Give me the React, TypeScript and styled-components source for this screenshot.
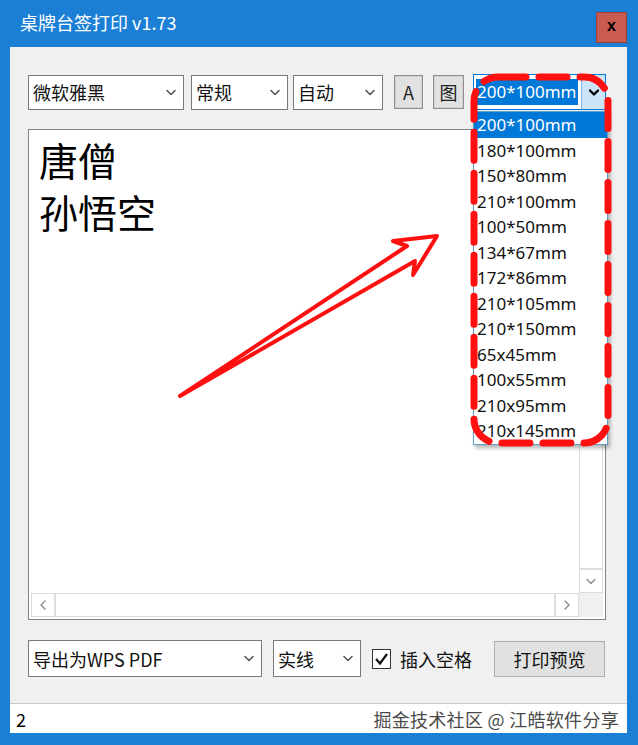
import React from "react";
import styled, { createGlobalStyle } from "styled-components";

const BLUE = "#1b7fd6";
const CJK = `"Noto Sans CJK SC", "Noto Sans", sans-serif`;
const UI = `"Noto Sans", "Noto Sans CJK SC", sans-serif`;

const GlobalStyle = createGlobalStyle`
  html, body { margin: 0; padding: 0; background: ${BLUE}; }
  body { font-family: ${CJK}; }
`;

const Window = styled.div`
  position: relative;
  width: 638px;
  height: 745px;
  background: ${BLUE};
  display: flex;
  flex-direction: column;
  overflow: hidden;
`;

const TitleBar = styled.div`
  height: 47px;
  flex: none;
  display: flex;
  justify-content: space-between;
  align-items: flex-start;
  padding: 0 11px 0 20px;
`;

const Title = styled.div`
  margin-top: 9px;
  color: #fff;
  font-size: 18px;
  line-height: 26px;
  font-family: ${CJK};
`;

const CloseButton = styled.div`
  margin-top: 12px;
  width: 31px;
  height: 31px;
  box-sizing: border-box;
  background: #c95b50;
  border: 1px solid #9b4038;
  display: flex;
  align-items: center;
  justify-content: center;
  font: bold 16px "Liberation Sans", sans-serif;
  color: #000;
  padding-bottom: 3px;
`;

const Client = styled.div`
  flex: 1;
  margin: 0 11px 12px 10px;
  background: #f0f0f0;
  display: flex;
  flex-direction: column;
`;

const Body = styled.div`
  padding: 27px 21px 0 18px;
  display: flex;
  flex-direction: column;
`;

const Toolbar = styled.div`
  display: flex;
  align-items: center;
  height: 36px;
`;

const SelectBox = styled.div<{ $w: number; $ml?: number; $h?: number }>`
  width: ${(p) => p.$w}px;
  height: ${(p) => p.$h ?? 35}px;
  margin-left: ${(p) => p.$ml ?? 0}px;
  flex: none;
  box-sizing: border-box;
  border: 1px solid #7a7a7a;
  background: #fff;
  display: flex;
  align-items: center;
  justify-content: space-between;
  padding: 0 7px 0 4px;
  font-size: 18px;
  color: #111;
  white-space: nowrap;
`;

const ToolButton = styled.div<{ $w: number; $ml: number }>`
  width: ${(p) => p.$w}px;
  height: 34px;
  margin-left: ${(p) => p.$ml}px;
  flex: none;
  box-sizing: border-box;
  background: #e1e1e1;
  border: 1px solid #8f8f8f;
  box-shadow: inset 0 0 0 1px #d0d0d0;
  display: flex;
  align-items: center;
  justify-content: center;
  font-size: 18px;
  color: #222;
`;

const Combo = styled.div`
  position: relative;
  width: 133px;
  height: 36px;
  margin-left: 9px;
  flex: none;
  box-sizing: border-box;
  border: 1px solid #0078d7;
  background: #fff;
  display: flex;
`;

const ComboField = styled.div`
  flex: 1;
  overflow: hidden;
  display: flex;
  align-items: center;
  padding-left: 2px;
`;

const Selection = styled.span`
  background: #0078d7;
  color: #fff;
  font-family: ${UI};
  font-size: 17px;
  line-height: 26px;
  padding: 0 1px;
  white-space: nowrap;
`;

const ComboArrow = styled.div`
  width: 23px;
  flex: none;
  background: #cce4f7;
  border-left: 1px solid #7eb4ea;
  display: flex;
  align-items: center;
  justify-content: center;
`;

const DropList = styled.div`
  position: absolute;
  top: calc(100% + 2px);
  left: -1px;
  width: 135px;
  box-sizing: border-box;
  background: #fff;
  border: 1px solid #5f9ec8;
  box-shadow: 2px 3px 4px rgba(0, 0, 0, 0.3);
  z-index: 5;
`;

const DropItem = styled.div<{ $active?: boolean }>`
  height: 25.5px;
  line-height: 25.5px;
  padding-left: 3px;
  font-family: ${UI};
  font-size: 17px;
  color: ${(p) => (p.$active ? "#fff" : "#111")};
  background: ${(p) => (p.$active ? "#0078d7" : "transparent")};
  white-space: nowrap;
`;

const Editor = styled.div`
  margin-top: 19px;
  height: 491px;
  box-sizing: border-box;
  border: 1px solid #828282;
  padding: 2px;
  background: #fff;
  display: grid;
  grid-template-columns: 1fr 24px;
  grid-template-rows: 1fr 24px;
`;

const EditorText = styled.div`
  padding: 1px 8px;
  font-size: 39px;
  line-height: 52px;
  color: #000;
  font-family: ${CJK};
`;

const VScroll = styled.div`
  display: flex;
  flex-direction: column;
`;

const HScroll = styled.div`
  display: flex;
`;

const Track = styled.div`
  flex: 1;
  background: #fff;
  border: 1px solid #dcdcdc;
`;

const ScrollBtn = styled.div`
  width: 24px;
  height: 24px;
  flex: none;
  box-sizing: border-box;
  background: #fff;
  border: 1px solid #dcdcdc;
  display: flex;
  align-items: center;
  justify-content: center;
`;

const Corner = styled.div`
  background: #f0f0f0;
`;

const BottomRow = styled.div`
  margin-top: 20px;
  height: 37px;
  display: flex;
  align-items: center;
`;

const CheckBox = styled.div`
  width: 19px;
  height: 20px;
  margin-left: 11px;
  flex: none;
  box-sizing: border-box;
  border: 1px solid #333;
  background: #fff;
  display: flex;
  align-items: center;
  justify-content: center;
`;

const CheckLabel = styled.span`
  margin-left: 9px;
  font-size: 18px;
  color: #111;
`;

const PreviewButton = styled.div`
  margin-left: auto;
  margin-right: 1px;
  width: 111px;
  height: 36px;
  box-sizing: border-box;
  background: #e1e1e1;
  border: 1px solid #adadad;
  display: flex;
  align-items: center;
  justify-content: center;
  font-size: 18px;
  color: #111;
`;

const StatusBar = styled.div`
  margin-top: auto;
  height: 30px;
  box-sizing: border-box;
  background: #fff;
  border-top: 1px solid #c8c8c8;
  display: flex;
  align-items: center;
  justify-content: space-between;
  padding: 0 8px 0 6px;
  font-size: 18px;
  color: #000;
`;

const Watermark = styled.span`
  color: #4a4a4a;
  font-size: 18px;
  letter-spacing: 0.3px;
  text-shadow: 0 0 2px #fff, 0 0 2px #fff;
`;

const Overlay = styled.svg`
  position: absolute;
  left: 0;
  top: 0;
  pointer-events: none;
  z-index: 10;
`;

const Chevron = ({ color = "#555", w = 1.6, dir = "down" }: { color?: string; w?: number; dir?: "down" | "left" | "right" }) => {
  const pts = dir === "down" ? "1,1.5 5,5.5 9,1.5" : dir === "left" ? "5,1 1,5 5,9" : "1,1 5,5 1,9";
  const size = dir === "down" ? { width: 10, height: 7 } : { width: 6, height: 10 };
  return (
    <svg width={size.width} height={size.height} viewBox={`0 0 ${size.width} ${size.height}`}>
      <polyline points={pts} fill="none" stroke={color} strokeWidth={w} strokeLinecap="round" strokeLinejoin="round" />
    </svg>
  );
};

const sizes = [
  "200*100mm",
  "180*100mm",
  "150*80mm",
  "210*100mm",
  "100*50mm",
  "134*67mm",
  "172*86mm",
  "210*105mm",
  "210*150mm",
  "65x45mm",
  "100x55mm",
  "210x95mm",
  "210x145mm",
];

export default function App() {
  return (
    <Window>
      <GlobalStyle />
      <TitleBar>
        <Title>桌牌台签打印 v1.73</Title>
        <CloseButton>x</CloseButton>
      </TitleBar>
      <Client>
        <Body>
          <Toolbar>
            <SelectBox $w={156}>
              微软雅黑 <Chevron />
            </SelectBox>
            <SelectBox $w={97} $ml={7}>
              常规 <Chevron />
            </SelectBox>
            <SelectBox $w={90} $ml={5}>
              自动 <Chevron />
            </SelectBox>
            <ToolButton $w={29} $ml={11}>A</ToolButton>
            <ToolButton $w={31} $ml={10}>图</ToolButton>
            <Combo>
              <ComboField>
                <Selection>200*100mm</Selection>
              </ComboField>
              <ComboArrow>
                <Chevron color="#000" w={2.4} />
              </ComboArrow>
              <DropList>
                {sizes.map((s, i) => (
                  <DropItem key={s} $active={i === 0}>
                    {s}
                  </DropItem>
                ))}
              </DropList>
            </Combo>
          </Toolbar>
          <Editor>
            <EditorText>
              唐僧
              <br />
              孙悟空
            </EditorText>
            <VScroll>
              <Track />
              <ScrollBtn>
                <Chevron color="#888" w={1.3} />
              </ScrollBtn>
            </VScroll>
            <HScroll>
              <ScrollBtn>
                <Chevron color="#888" w={1.3} dir="left" />
              </ScrollBtn>
              <Track />
              <ScrollBtn>
                <Chevron color="#888" w={1.3} dir="right" />
              </ScrollBtn>
            </HScroll>
            <Corner />
          </Editor>
          <BottomRow>
            <SelectBox $w={234} $h={37}>
              导出为WPS PDF <Chevron />
            </SelectBox>
            <SelectBox $w={88} $ml={11} $h={37}>
              实线 <Chevron />
            </SelectBox>
            <CheckBox>
              <svg width="15" height="14" viewBox="0 0 15 14">
                <polyline points="2,7 6,11.5 13,2" fill="none" stroke="#111" strokeWidth="2.2" />
              </svg>
            </CheckBox>
            <CheckLabel>插入空格</CheckLabel>
            <PreviewButton>打印预览</PreviewButton>
          </BottomRow>
        </Body>
        <StatusBar>
          <span>2</span>
          <Watermark>掘金技术社区 @ 江皓软件分享</Watermark>
        </StatusBar>
      </Client>
      <Overlay width={638} height={745} viewBox="0 0 638 745">
        <rect x="474" y="77" width="134" height="366" rx="24" fill="none" stroke="#ff1010" strokeWidth="7" strokeDasharray="28 13" strokeLinecap="round" />
        <polygon
          points="180,396 407,246 393,241 437,236 413,275 415,261"
          fill="none"
          stroke="#ff1010"
          strokeWidth="4"
          strokeLinejoin="round"
        />
      </Overlay>
    </Window>
  );
}
